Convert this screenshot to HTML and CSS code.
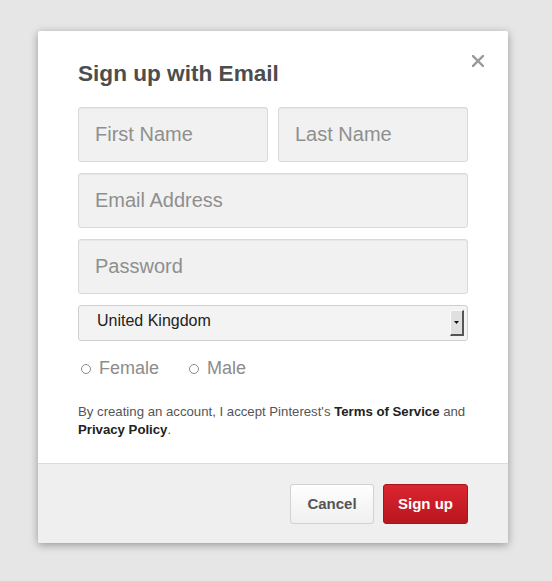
FILE: index.html
```html
<!DOCTYPE html>
<html>
<head>
<meta charset="utf-8">
<link rel="stylesheet" href="styles.css">
</head>
<body>
<div class="modal">
  <div class="modal-body">
    <button class="close" aria-label="Close">
      <svg width="12" height="12" viewBox="0 0 12 12"><path d="M1 1L11 11M11 1L1 11" stroke="#999" stroke-width="2.4" stroke-linecap="square"/></svg>
    </button>
    <h1 class="title">Sign up with Email</h1>
    <div class="row two">
      <input class="field" type="text" placeholder="First Name">
      <input class="field" type="text" placeholder="Last Name">
    </div>
    <div class="row">
      <input class="field" type="text" placeholder="Email Address">
    </div>
    <div class="row">
      <input class="field" type="password" placeholder="Password">
    </div>
    <div class="select">
      <span class="select-text">United Kingdom</span>
      <span class="select-arrow"><svg width="5" height="3" viewBox="0 0 5 3"><path d="M0 0H5L2.5 3Z" fill="#111"/></svg></span>
    </div>
    <div class="radios">
      <label class="radio"><span class="dot"></span>Female</label>
      <label class="radio"><span class="dot"></span>Male</label>
    </div>
    <p class="terms">By creating an account, I accept Pinterest's <b>Terms of Service</b> and <b>Privacy Policy</b>.</p>
  </div>
  <div class="modal-footer">
    <button class="btn cancel">Cancel</button>
    <button class="btn primary">Sign up</button>
  </div>
</div>
</body>
</html>
```
FILE: styles.css
```css
html, body {
  margin: 0;
  padding: 0;
}
body {
  background: #e6e6e6;
  font-family: "Liberation Sans", Arial, sans-serif;
  height: 581px;
  padding-top: 31px;
  padding-left: 38px;
  box-sizing: border-box;
}
.modal {
  width: 470px;
  background: #fff;
  border-radius: 2px;
  box-shadow: 0 2px 9px rgba(0,0,0,0.35);
}
.modal-body {
  position: relative;
  padding: 29px 40px 24px 40px;
}
.close {
  position: absolute;
  top: 24px;
  right: 24px;
  width: 12px;
  height: 12px;
  padding: 0;
  border: 0;
  background: none;
  display: flex;
}
.title {
  margin: 0 0 19px 0;
  font-size: 22.6px;
  line-height: 28px;
  font-weight: bold;
  color: #4d4d4d;
}
.row {
  display: flex;
  gap: 10px;
  margin-bottom: 11px;
}
.field {
  flex: 1;
  min-width: 0;
  height: 55px;
  box-sizing: border-box;
  border: 1px solid #d9d9d9;
  border-radius: 3px;
  background: #f1f1f1;
  box-shadow: inset 0 1px 1px rgba(0,0,0,0.04);
  padding: 0 16px;
  font-family: "Liberation Sans", Arial, sans-serif;
  font-size: 20px;
  color: #333;
  outline: none;
}
.field::placeholder {
  color: #8f8f8f;
}
.select {
  height: 36px;
  box-sizing: border-box;
  border: 1px solid #cfcfcf;
  border-radius: 3px;
  background: #f3f3f3;
  display: flex;
  align-items: center;
  justify-content: space-between;
  padding: 0 3px 0 18px;
}
.select-text {
  font-size: 16px;
  color: #222;
  margin-bottom: 4px;
}
.select-arrow {
  width: 14px;
  height: 26px;
  box-sizing: border-box;
  background: #e0e0e0;
  border-right: 2px solid #555;
  border-bottom: 2px solid #555;
  border-top: 1px solid #fafafa;
  border-left: 1px solid #fafafa;
  display: flex;
  align-items: center;
  justify-content: center;
}
.radios {
  display: flex;
  gap: 30px;
  margin-top: 17px;
  padding-left: 3px;
}
.radio {
  display: flex;
  align-items: center;
  font-size: 18px;
  color: #8c8c8c;
}
.dot {
  width: 10px;
  height: 10px;
  box-sizing: border-box;
  border: 1px solid #8a8a8a;
  border-radius: 50%;
  background: #fff;
  margin-right: 8px;
}
.terms {
  margin: 24px 0 0 0;
  font-size: 13.2px;
  line-height: 18px;
  color: #555;
}
.terms b {
  color: #222;
}
.modal-footer {
  border-top: 1px solid #dcdcdc;
  background: #efefef;
  padding: 20px 40px 19px 40px;
  display: flex;
  justify-content: flex-end;
  gap: 9px;
  border-radius: 0 0 2px 2px;
}
.btn {
  height: 40px;
  border-radius: 3px;
  font-family: "Liberation Sans", Arial, sans-serif;
  font-size: 15px;
  font-weight: bold;
  padding: 0 0 2px 0;
  cursor: pointer;
}
.cancel {
  width: 84px;
  border: 1px solid #d2d2d2;
  background: linear-gradient(#fefefe, #f0f0f0);
  color: #555;
}
.primary {
  width: 85px;
  border: 1px solid #a5151b;
  background: linear-gradient(#da2530, #b9161f);
  color: #fff;
}
```
